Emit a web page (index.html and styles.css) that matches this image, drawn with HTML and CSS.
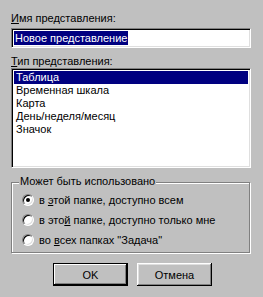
FILE: index.html
```html
<!DOCTYPE html>
<html>
<head>
<meta charset="utf-8">
<link rel="stylesheet" href="styles.css">
</head>
<body>
<div class="dialog">
  <div class="label"><u>И</u>мя представления:</div>
  <div class="field"><span class="sel">Новое представление</span></div>
  <div class="label label-gap"><u>Т</u>ип представления:</div>
  <div class="listbox">
    <div class="item selected">Таблица</div>
    <div class="item">Временная шкала</div>
    <div class="item">Карта</div>
    <div class="item">День/неделя/месяц</div>
    <div class="item">Значок</div>
  </div>
  <div class="group">
    <span class="group-title">Может быть использовано</span>
    <div class="radio-row"><span class="radio checked"></span><span>в <u>э</u>той папке, доступно всем</span></div>
    <div class="radio-row"><span class="radio"></span><span>в это<u>й</u> папке, доступно только мне</span></div>
    <div class="radio-row"><span class="radio"></span><span>во <u>в</u>сех папках "Задача"</span></div>
  </div>
  <div class="buttons">
    <div class="btn default">OK</div>
    <div class="btn">Отмена</div>
  </div>
</div>
</body>
</html>
```
FILE: styles.css
```css
html, body {
  margin: 0;
  padding: 0;
  background: #c0c0c0;
}
body {
  font-family: "Liberation Sans", Arial, sans-serif;
  font-size: 11px;
  color: #000;
  width: 263px;
  height: 297px;
  overflow: hidden;
}
.dialog {
  padding: 12px 0 0 11px;
  width: 240px;
}
.label {
  line-height: 13px;
  height: 13px;
  margin-bottom: 3px;
}
.label-gap {
  margin-top: 7px;
  margin-bottom: 0;
}
u {
  text-decoration: underline;
  text-underline-offset: 1px;
}
.field {
  box-sizing: border-box;
  width: 240px;
  height: 20px;
  background: #fff;
  border: 1px solid;
  border-color: #808080 #fff #fff #808080;
  box-shadow: inset 1px 1px #000, inset -1px -1px #dfdfdf;
  padding: 2px 0 0 2px;
}
.sel {
  display: inline-block;
  background: #000080;
  color: #fff;
  line-height: 14px;
  height: 14px;
  padding: 0 1px;
}
.listbox {
  box-sizing: border-box;
  width: 240px;
  height: 100px;
  background: #fff;
  border: 1px solid;
  border-color: #808080 #fff #fff #808080;
  box-shadow: inset 1px 1px #000, inset -1px -1px #dfdfdf;
  padding: 2px 2px 0 2px;
}
.item {
  line-height: 13px;
  height: 13px;
  padding-left: 2px;
}
.item.selected {
  background: #000080;
  color: #fff;
}
.group {
  position: relative;
  box-sizing: border-box;
  width: 239px;
  height: 71px;
  margin-top: 14px;
  border: 1px solid #808080;
  box-shadow: inset 1px 1px #fff, 1px 1px #fff;
  padding: 7px 0 0 10px;
}
.group-title {
  position: absolute;
  top: -8px;
  left: 7px;
  background: #c0c0c0;
  padding: 0 1px;
  line-height: 13px;
}
.radio-row {
  display: flex;
  align-items: center;
  height: 20px;
  gap: 5px;
}
.radio {
  position: relative;
  box-sizing: border-box;
  width: 12px;
  height: 12px;
  border-radius: 50%;
  background: #fff;
  border: 1px solid;
  border-color: #808080 #fff #fff #808080;
  box-shadow: inset 1px 1px #000, inset -1px -1px #dfdfdf;
  flex: none;
}
.radio.checked::after {
  content: "";
  position: absolute;
  left: 3px;
  top: 3px;
  width: 4px;
  height: 4px;
  border-radius: 50%;
  background: #000;
}
.buttons {
  display: flex;
  gap: 9px;
  margin-top: 10px;
  padding-left: 42px;
}
.btn {
  box-sizing: border-box;
  width: 75px;
  height: 23px;
  display: flex;
  align-items: center;
  justify-content: center;
  background: #c0c0c0;
  box-shadow: inset -1px -1px #000, inset 1px 1px #fff, inset -2px -2px #808080, inset 2px 2px #dfdfdf;
}
.btn.default {
  border: 1px solid #000;
  box-shadow: inset -1px -1px #000, inset 1px 1px #fff, inset -2px -2px #808080;
}
```
